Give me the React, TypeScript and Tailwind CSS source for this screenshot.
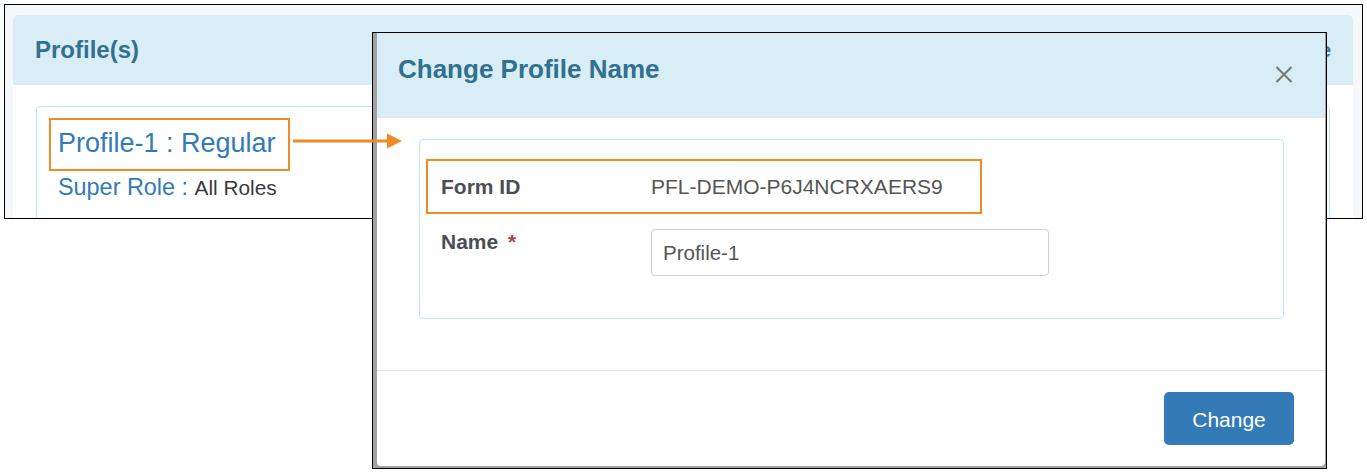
import React from "react";

const font = { fontFamily: '"Liberation Sans", Arial, sans-serif' };

export default function App() {
  return (
    <div
      className="relative w-[1367px] h-[474px] overflow-hidden bg-white pl-[4px] pt-[4px]"
      style={font}
    >
      {/* background screenshot frame */}
      <div className="w-[1359px] h-[215px] overflow-hidden border border-black bg-[#f6f7fa] pl-[8px] pr-[9px] pt-[10px]">
        <div className="rounded-t-[5px] bg-white">
          <div className="flex h-[70px] items-center justify-between rounded-t-[5px] bg-[#d9edf7] pl-[22px] pr-[22px]">
            <span className="text-[24px] font-bold text-[#31708f]">Profile(s)</span>
            <span className="whitespace-nowrap text-[20px] font-bold text-[#337ab7]">Add Profile</span>
          </div>
          <div className="px-[23px] pt-[21px] pb-[40px]">
            <div className="h-[200px] rounded-[4px] border border-[#bce8f1] pl-[12px] pt-[11px]">
              <div className="h-[53px] w-[241px] border-2 border-[#f08a24] pl-[7px] pt-[7px]">
                <span className="text-[27px] leading-[32px] text-[#337ab7]">Profile-1 : Regular</span>
              </div>
              <div className="pl-[9px] pt-[2px] leading-[28px]">
                <span className="text-[23.4px] text-[#337ab7]">Super Role : </span>
                <span className="text-[20.8px] text-[#3a3a3a]">All Roles</span>
              </div>
            </div>
          </div>
        </div>
      </div>

      {/* modal screenshot */}
      <div className="absolute left-[372px] top-[32px] flex h-[437px] w-[955px] border border-black bg-[#a2a2a2] pl-[4px] pr-[1px] pb-[2px]">
        <div className="flex flex-1 flex-col overflow-hidden rounded-b-[4px] bg-white">
          <div className="flex h-[85px] items-start justify-between border-b border-[#e5e5e5] bg-[#d9edf7] pl-[21px] pr-[32px] pt-[21px]">
            <span className="text-[26px] font-bold leading-[30px] text-[#31708f]">
              Change Profile Name
            </span>
            <svg className="mt-[12px]" width="18" height="17" viewBox="0 0 18 17">
              <path d="M1.5 1 L16.5 16 M16.5 1 L1.5 16" stroke="#777" strokeWidth="2" />
            </svg>
          </div>
          <div className="pl-[42px] pr-[41px] pt-[21px] pb-[51px]">
            <div className="h-[180px] rounded-[4px] border border-[#bce8f1] pl-[6px] pt-[19px]">
              <div className="flex h-[55px] w-[556px] items-center border-2 border-[#f08a24] pl-[13px]">
                <span className="w-[210px] text-[21px] font-bold text-[#4a4f55]">Form ID</span>
                <span className="text-[21px] text-[#555]">PFL-DEMO-P6J4NCRXAERS9</span>
              </div>
              <div className="mt-[15px] flex items-start pl-[15px]">
                <span className="w-[210px] pt-[1px] text-[21px] font-bold leading-[24px] text-[#4a4f55]">
                  Name <span className="ml-[4px] text-[#a94442]">*</span>
                </span>
                <div className="flex h-[47px] w-[398px] items-center rounded-[4px] border border-[#ccd0d6] pl-[11px] pt-[2px] text-[20.5px] text-[#555]">
                  Profile-1
                </div>
              </div>
            </div>
          </div>
          <div className="flex justify-end border-t border-[#e5e5e5] pr-[31px] pt-[21px]">
            <button className="h-[53px] w-[130px] rounded-[5px] bg-[#337ab7] pt-[2px] text-[21px] text-white">
              Change
            </button>
          </div>
        </div>
      </div>

      {/* arrow (drawn over the modal edge) */}
      <svg
        className="absolute left-[290px] top-[130px]"
        width="114"
        height="22"
        viewBox="0 0 114 22"
      >
        <line x1="3" y1="11" x2="99" y2="11" stroke="#f08a24" strokeWidth="3.2" />
        <polygon points="97,3.5 112,11 97,18.5" fill="#f08a24" />
      </svg>
    </div>
  );
}
